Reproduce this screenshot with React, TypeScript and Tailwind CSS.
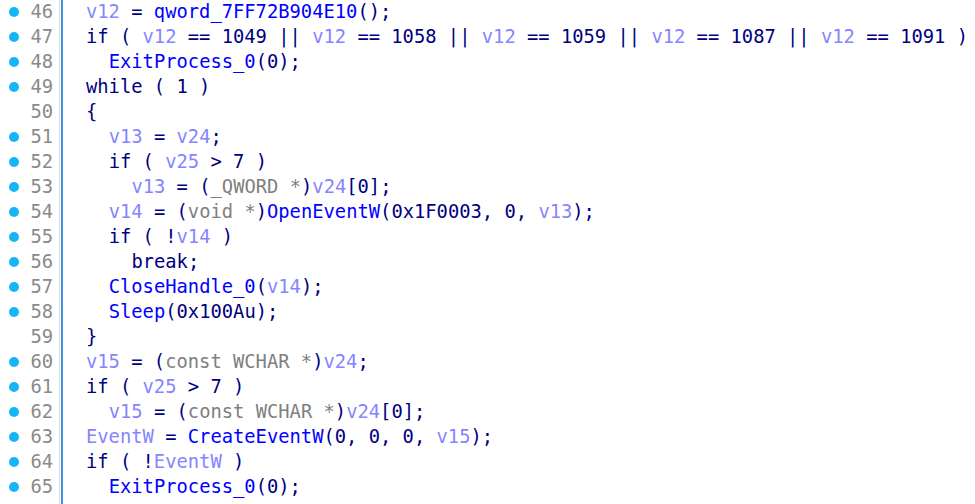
type Seg = [string, string];

// token colours, IDA-style pseudocode view
const C: Record<string, string> = {
  p: 'text-[#000080]', // plain / keywords / numbers
  f: 'text-[#0000ff]', // function names
  v: 'text-[#8585ff]', // local variables
  t: 'text-[#808080]', // casts / types
};

const lines: { n: number; dot: boolean; ind: number; segs: Seg[] }[] = [
  { n: 46, dot: true, ind: 0, segs: [['v', 'v12'], ['p', ' = '], ['f', 'qword_7FF72B904E10'], ['p', '();']] },
  {
    n: 47,
    dot: true,
    ind: 0,
    segs: [
      ['p', 'if ( '], ['v', 'v12'], ['p', ' == 1049 || '],
      ['v', 'v12'], ['p', ' == 1058 || '],
      ['v', 'v12'], ['p', ' == 1059 || '],
      ['v', 'v12'], ['p', ' == 1087 || '],
      ['v', 'v12'], ['p', ' == 1091 )'],
    ],
  },
  { n: 48, dot: true, ind: 1, segs: [['f', 'ExitProcess_0'], ['p', '(0);']] },
  { n: 49, dot: true, ind: 0, segs: [['p', 'while ( 1 )']] },
  { n: 50, dot: false, ind: 0, segs: [['p', '{']] },
  { n: 51, dot: true, ind: 1, segs: [['v', 'v13'], ['p', ' = '], ['v', 'v24'], ['p', ';']] },
  { n: 52, dot: true, ind: 1, segs: [['p', 'if ( '], ['v', 'v25'], ['p', ' > 7 )']] },
  { n: 53, dot: true, ind: 2, segs: [['v', 'v13'], ['p', ' = ('], ['t', '_QWORD *'], ['p', ')'], ['v', 'v24'], ['p', '[0];']] },
  {
    n: 54,
    dot: true,
    ind: 1,
    segs: [['v', 'v14'], ['p', ' = ('], ['t', 'void *'], ['p', ')'], ['f', 'OpenEventW'], ['p', '(0x1F0003, 0, '], ['v', 'v13'], ['p', ');']],
  },
  { n: 55, dot: true, ind: 1, segs: [['p', 'if ( !'], ['v', 'v14'], ['p', ' )']] },
  { n: 56, dot: true, ind: 2, segs: [['p', 'break;']] },
  { n: 57, dot: true, ind: 1, segs: [['f', 'CloseHandle_0'], ['p', '('], ['v', 'v14'], ['p', ');']] },
  { n: 58, dot: true, ind: 1, segs: [['f', 'Sleep'], ['p', '(0x100Au);']] },
  { n: 59, dot: false, ind: 0, segs: [['p', '}']] },
  { n: 60, dot: true, ind: 0, segs: [['v', 'v15'], ['p', ' = ('], ['t', 'const WCHAR *'], ['p', ')'], ['v', 'v24'], ['p', ';']] },
  { n: 61, dot: true, ind: 0, segs: [['p', 'if ( '], ['v', 'v25'], ['p', ' > 7 )']] },
  { n: 62, dot: true, ind: 1, segs: [['v', 'v15'], ['p', ' = ('], ['t', 'const WCHAR *'], ['p', ')'], ['v', 'v24'], ['p', '[0];']] },
  {
    n: 63,
    dot: true,
    ind: 0,
    segs: [['v', 'EventW'], ['p', ' = '], ['f', 'CreateEventW'], ['p', '(0, 0, 0, '], ['v', 'v15'], ['p', ');']],
  },
  { n: 64, dot: true, ind: 0, segs: [['p', 'if ( !'], ['v', 'EventW'], ['p', ' )']] },
  { n: 65, dot: true, ind: 1, segs: [['f', 'ExitProcess_0'], ['p', '(0);']] },
];

const indentCls = ['pl-0', 'pl-[22.7px]', 'pl-[45.4px]'];

export default function App() {
  return (
    <div className="flex h-[504px] w-[975px] overflow-hidden bg-white font-['DejaVu_Sans_Mono',monospace] text-[18.8px] leading-[25px] whitespace-pre">
      {/* Gutter */}
      <div className="flex w-[59px] shrink-0 flex-col -mt-[1px]">
        {lines.map((l) => (
          <div key={l.n} className="flex h-[25px] items-center">
            <div className="flex w-[27px] justify-center">
              {l.dot && <span className="block h-[10px] w-[10px] rounded-full bg-[#14b6f5]" />}
            </div>
            <span className="w-[26px] text-right text-[#8a8a8a]">{l.n}</span>
          </div>
        ))}
      </div>
      <div className="w-px shrink-0 bg-[#d8d8d8]" />
      <div className="w-px shrink-0 bg-white" />
      <div className="w-[2px] shrink-0 bg-[#3f8fe0]" />

      {/* Code */}
      <div className="flex flex-col pl-[23px] -mt-[1px]">
        {lines.map((l) => (
          <div key={l.n} className={`h-[25px] ${indentCls[l.ind]}`}>
            {l.segs.map(([k, s], i) => (
              <span key={i} className={C[k]}>
                {s}
              </span>
            ))}
          </div>
        ))}
      </div>
    </div>
  );
}
